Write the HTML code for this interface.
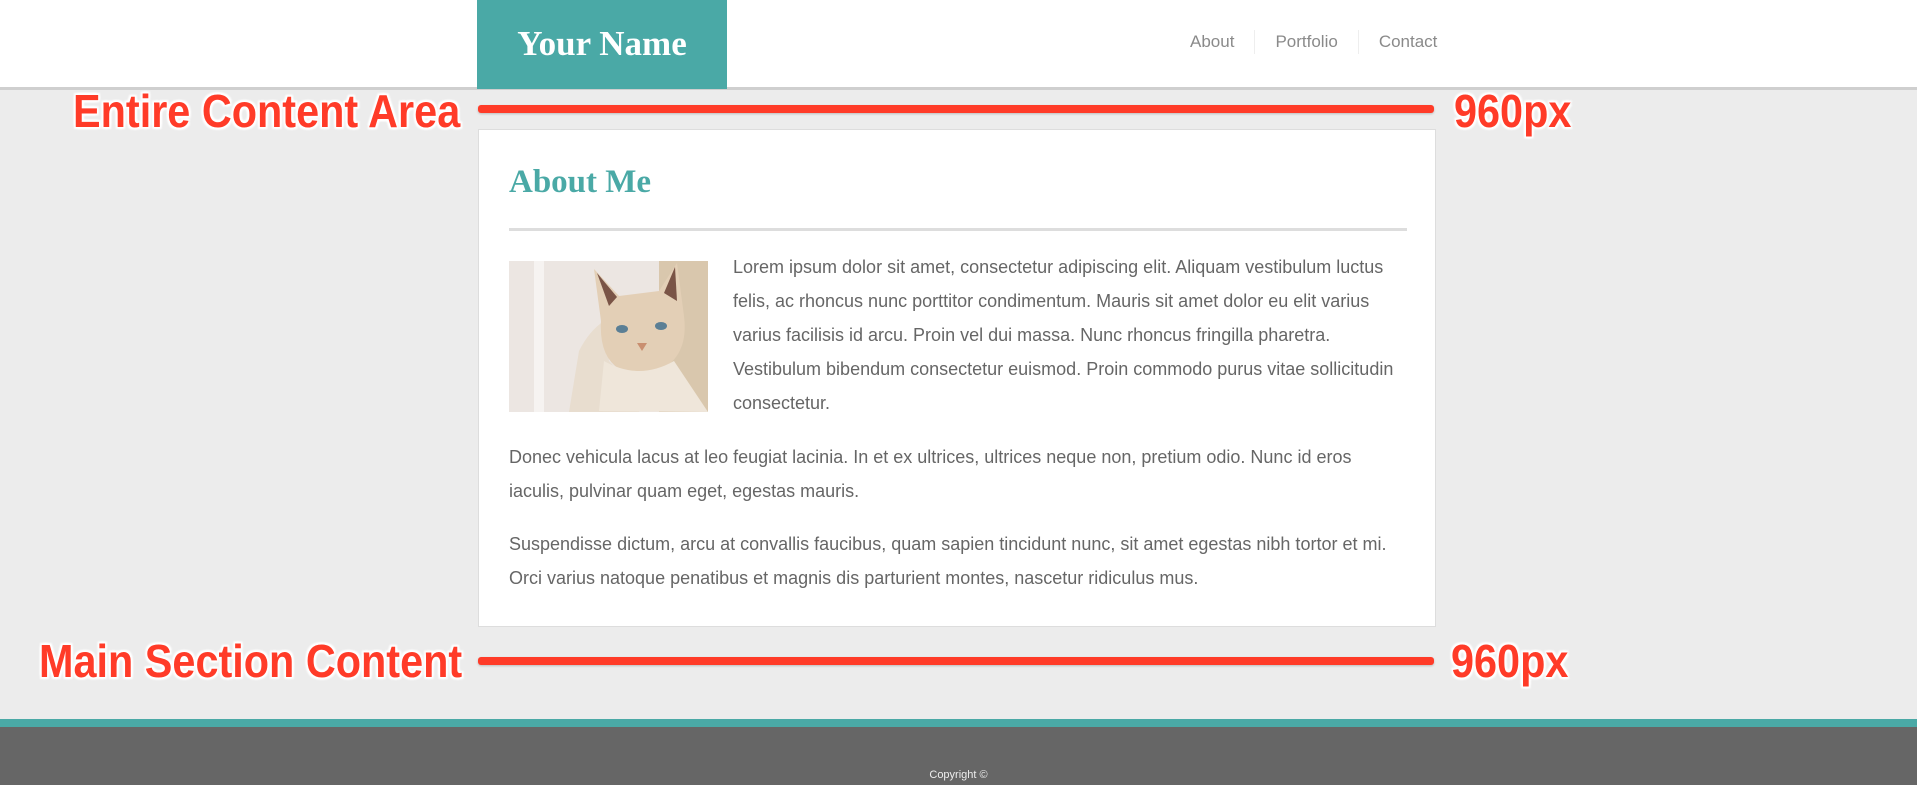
<!DOCTYPE html>
<html><head><meta charset="utf-8"><style>
*{margin:0;padding:0;box-sizing:border-box}
html,body{width:1917px;height:785px;overflow:hidden}
body{background:#ececec;font-family:"Liberation Sans",Arial,sans-serif;position:relative}
.hdr{position:absolute;left:0;top:0;width:1917px;height:90px;background:#fff;border-bottom:3px solid #cfcfcf}
.logo{position:absolute;left:477px;top:0;width:250px;height:89px;background:#4aa9a6;color:#fff;font-family:"Liberation Serif",serif;font-weight:bold;font-size:35px;text-align:center;line-height:88px}
.nav{position:absolute;top:30px;left:1180px;font-size:17px;color:#8a8a8a;display:flex}
.nav span{padding:0 20px;line-height:24px;border-left:1px solid #eee}
.nav span:first-child{border-left:none;padding-left:10px}
.card{position:absolute;left:478px;top:129px;width:958px;height:498px;background:#fff;border:1px solid #ddd}
h1{position:absolute;left:30px;top:34px;font-family:"Liberation Serif",serif;color:#4aa9a6;font-size:33px;font-weight:bold}
.hr{position:absolute;left:30px;top:98px;width:898px;height:3px;background:#ddd}
.cat{position:absolute;left:30px;top:131px;width:199px;height:151px}
.t{position:absolute;font-size:18px;line-height:34px;color:#666;white-space:nowrap}
.ann{position:absolute;color:#ff3b28;font-weight:bold;font-size:46px;transform:scaleX(.9);transform-origin:left top;text-shadow:0 0 3px #fff,0 0 3px #fff,0 0 3px #fff,2px 2px 2px #fff,-2px -2px 2px #fff,2px -2px 2px #fff,-2px 2px 2px #fff}
.line{position:absolute;height:8px;background:#ff3b28;border-radius:3px;box-shadow:0 1px 2px rgba(0,0,0,.2)}
.foot{position:absolute;left:0;top:719px;width:1917px;height:66px;background:#666;border-top:8px solid #4aa9a6}
.copy{position:absolute;left:0;width:1917px;top:42px;text-align:center;font-size:11px;color:#eee}
</style></head><body>
<div class="hdr"><div class="logo">Your Name</div>
<div class="nav"><span>About</span><span>Portfolio</span><span>Contact</span></div></div>
<div class="card">
<h1>About Me</h1>
<div class="hr"></div>
<svg class="cat" viewBox="0 0 199 151">
<rect width="199" height="151" fill="#ece6e2"/>
<rect x="25" y="0" width="10" height="151" fill="#f6f3f1"/>
<rect x="150" y="0" width="49" height="151" fill="#d9c7ad"/>
<path d="M60 151 L70 90 Q80 70 95 60 L100 100 Q140 140 130 151Z" fill="#e8ddcf"/>
<path d="M85 8 L110 35 L150 30 L168 2 L175 55 Q180 95 150 110 Q130 118 110 108 Q90 95 92 60Z" fill="#e3cfb6"/>
<path d="M90 150 L95 100 Q130 120 165 100 L199 151Z" fill="#efe6da"/>
<path d="M88 12 L108 36 L100 45Z" fill="#7a5446"/><path d="M166 6 L168 40 L155 32Z" fill="#7a5446"/>
<ellipse cx="113" cy="68" rx="6" ry="4" fill="#5b7f95"/><ellipse cx="152" cy="65" rx="6" ry="4" fill="#5b7f95"/>
<path d="M128 82 L138 82 L133 90Z" fill="#c98f70"/>
</svg>
<div class="t" style="left:254px;top:120px">Lorem ipsum dolor sit amet, consectetur adipiscing elit. Aliquam vestibulum luctus<br>felis, ac rhoncus nunc porttitor condimentum. Mauris sit amet dolor eu elit varius<br>varius facilisis id arcu. Proin vel dui massa. Nunc rhoncus fringilla pharetra.<br>Vestibulum bibendum consectetur euismod. Proin commodo purus vitae sollicitudin<br>consectetur.</div>
<div class="t" style="left:30px;top:310px">Donec vehicula lacus at leo feugiat lacinia. In et ex ultrices, ultrices neque non, pretium odio. Nunc id eros<br>iaculis, pulvinar quam eget, egestas mauris.</div>
<div class="t" style="left:30px;top:397px">Suspendisse dictum, arcu at convallis faucibus, quam sapien tincidunt nunc, sit amet egestas nibh tortor et mi.<br>Orci varius natoque penatibus et magnis dis parturient montes, nascetur ridiculus mus.</div>
</div>
<div class="ann" style="left:73px;top:84px">Entire Content Area</div>
<div class="line" style="left:478px;top:105px;width:956px"></div>
<div class="ann" style="left:1454px;top:84px">960px</div>
<div class="ann" style="left:39px;top:634px">Main Section Content</div>
<div class="line" style="left:478px;top:657px;width:956px"></div>
<div class="ann" style="left:1451px;top:634px">960px</div>
<div class="foot"><div class="copy">Copyright ©</div></div>
</body></html>
